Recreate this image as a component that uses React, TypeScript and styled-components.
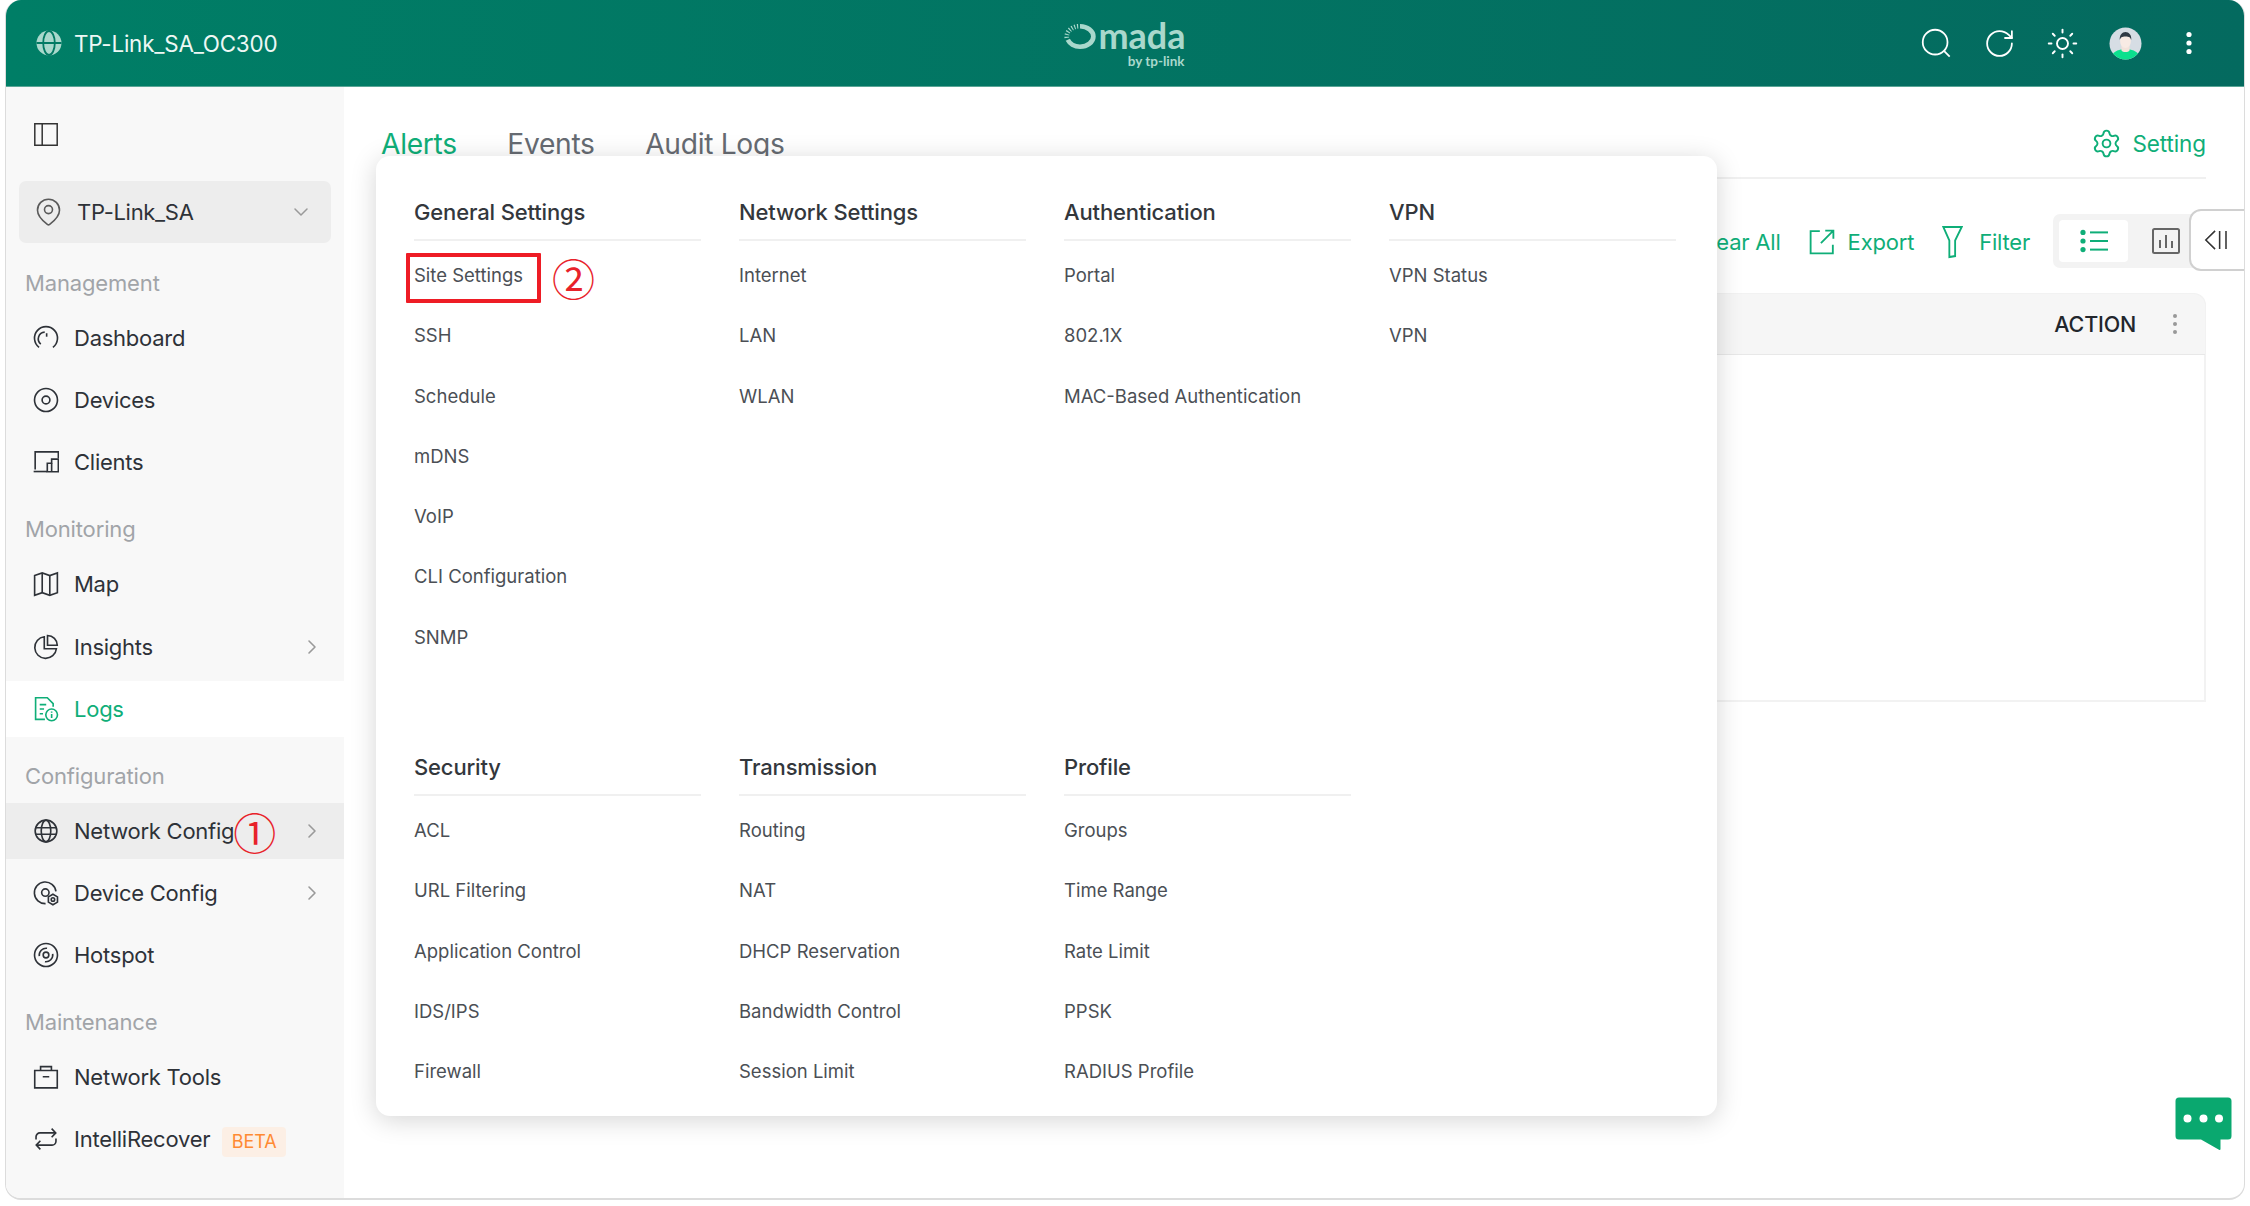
import React from "react";
import styled, { createGlobalStyle } from "styled-components";
import { Settings, Sun, RotateCw, ChevronRight, ChevronDown } from "lucide-react";

const Global = createGlobalStyle`
  html, body { margin: 0; padding: 0; background: #fff; }
  body { font-family: Inter, "Noto Sans", "Liberation Sans", sans-serif; }
  * { box-sizing: border-box; }
`;

const GREEN = "#0fae78";

const Page = styled.div`
  width: 2250px;
  height: 1206px;
  padding: 0 5px 6px;
`;
const Win = styled.div`
  position: relative;
  height: 1200px;
  border: solid #dcdcdc;
  border-width: 0 1px 2px 1px;
  border-radius: 16px;
  overflow: hidden;
  display: flex;
  flex-direction: column;
  background: #fff;
`;
const TopBar = styled.header`
  height: 87px;
  flex: none;
  margin: 0 -1px;
  background: linear-gradient(90deg, #007e66, #046a5f);
  border-bottom: 1px solid #5aa596;
  display: grid;
  grid-template-columns: 1fr auto 1fr;
  align-items: center;
`;
const Brand = styled.div`
  display: flex;
  align-items: center;
  gap: 12px;
  padding-left: 31px;
  color: #eef8f5;
  font-size: 22.4px;
  letter-spacing: -0.2px;
`;
const Logo = styled.div`
  display: flex;
  flex-direction: column;
  align-items: flex-end;
  color: #a9d8cc;
  margin-top: 2px;
`;
const LogoWord = styled.div`
  display: flex;
  align-items: flex-end;
  gap: 2px;
  font-size: 36px;
  font-weight: 700;
  line-height: 30px;
  font-family: Lato, Inter, sans-serif;
`;
const LogoSub = styled.div`
  font-size: 13.5px;
  line-height: 16px;
  margin-top: 3px;
  margin-right: 1px;
  font-family: Lato, Inter, sans-serif;
  font-weight: 700;
`;
const TopActions = styled.div`
  justify-self: end;
  display: flex;
  align-items: center;
  color: #fff;
  padding-right: 40px;
  gap: 30px;
`;
const TopIcon = styled.span`
  width: 33px;
  height: 33px;
  display: flex;
  align-items: center;
  justify-content: center;
`;
const Main = styled.div`
  flex: 1;
  display: flex;
  min-height: 0;
`;
const Sidebar = styled.aside`
  width: 338px;
  flex: none;
  background: #f8f8f8;
  padding-top: 35px;
`;
const ToggleRow = styled.div`
  height: 24px;
  padding-left: 28px;
  color: #333;
  display: flex;
  align-items: center;
`;
const SiteSelect = styled.div`
  margin: 35px 13px 0;
  height: 62px;
  background: #ededed;
  border-radius: 7px;
  display: flex;
  align-items: center;
  padding: 0 18px 0 17px;
  gap: 16px;
  font-size: 22px;
  color: #2e3238;
  letter-spacing: -0.3px;
`;
const GroupLabel = styled.div<{ $top: number }>`
  margin: ${(p) => p.$top}px 0 11px 19px;
  height: 32px;
  line-height: 32px;
  font-size: 22px;
  color: #a1a4a8;
  letter-spacing: -0.15px;
`;
const NavList = styled.nav`
  display: flex;
  flex-direction: column;
  gap: 6.2px;
`;
const NavItem = styled.div<{ $state?: "active" | "hover" }>`
  height: 56px;
  display: flex;
  align-items: center;
  padding: 0 20px 0 27px;
  gap: 15px;
  font-size: 22px;
  letter-spacing: -0.25px;
  color: ${(p) => (p.$state === "active" ? GREEN : "#2e3238")};
  background: ${(p) => (p.$state === "active" ? "#fff" : p.$state === "hover" ? "#ededed" : "transparent")};
`;
const NavIcon = styled.span`
  width: 26px;
  height: 26px;
  flex: none;
  display: flex;
  color: inherit;
`;
const Chevron = styled.span`
  margin-left: auto;
  display: flex;
  color: #9a9a9a;
`;
const Beta = styled.span`
  margin-left: -3px;
  margin-top: 5px;
  width: 64px;
  height: 30px;
  border-radius: 4px;
  background: #fcefe5;
  color: #ff8a33;
  font-size: 18px;
  display: flex;
  align-items: center;
  justify-content: center;
  letter-spacing: 0;
`;
const Mark = styled.span`
  font-family: "Noto Sans CJK SC", "DejaVu Sans", sans-serif;
  color: #e8222a;
  font-size: 43px;
  line-height: 43px;
  font-weight: 400;
`;
const NavMark = styled(Mark)`
  margin-left: -16px;
  margin-top: 2px;
`;
const Content = styled.section`
  flex: 1;
  padding: 0 38px 0 37px;
  min-width: 0;
`;
const Tabs = styled.div`
  height: 92px;
  padding-top: 23px;
  border-bottom: 2px solid #f0f0f0;
  display: flex;
  align-items: center;
  gap: 50.5px;
`;
const Tab = styled.span<{ $on?: boolean }>`
  font-size: 28.2px;
  letter-spacing: -0.3px;
  color: ${(p) => (p.$on ? GREEN : "#666b72")};
`;
const SettingLink = styled.span`
  margin-left: auto;
  display: flex;
  align-items: center;
  gap: 10px;
  font-size: 22.5px;
  letter-spacing: -0.1px;
  color: ${GREEN};
`;
const Toolbar = styled.div`
  margin-top: 35px;
  height: 54px;
  display: flex;
  justify-content: flex-end;
  align-items: center;
`;
const Action = styled.span<{ $gap: number; $after: number }>`
  display: flex;
  align-items: center;
  gap: ${(p) => p.$gap}px;
  margin-right: ${(p) => p.$after}px;
  margin-top: 2px;
  font-size: 22px;
  letter-spacing: -0.2px;
  color: ${GREEN};
`;
const ViewSwitch = styled.div`
  width: 153px;
  height: 54px;
  background: #f3f3f3;
  border-radius: 7px;
  padding: 6px;
  display: flex;
  gap: 3px;
`;
const ViewCell = styled.span<{ $on?: boolean }>`
  width: 69px;
  border-radius: 4px;
  background: ${(p) => (p.$on ? "#fff" : "transparent")};
  display: flex;
  align-items: center;
  justify-content: center;
`;
const Table = styled.div`
  margin-top: 25px;
  height: 409px;
  border: 2px solid #f2f2f2;
  border-radius: 12px 12px 0 0;
`;
const TableHead = styled.div`
  height: 61px;
  margin: -1px;
  background: #f6f6f6;
  border-bottom: 1px solid #e8e8e8;
  border-radius: 12px 12px 0 0;
  display: flex;
  justify-content: flex-end;
  align-items: center;
  gap: 35px;
  padding-right: 26px;
  font-size: 21.5px;
  font-weight: 500;
  letter-spacing: -0.2px;
  color: #22262c;
`;
const Collapse = styled.div`
  position: absolute;
  top: 209px;
  right: -2px;
  width: 57px;
  height: 62px;
  padding-right: 3px;
  background: #fff;
  border: 2px solid #d0d0d0;
  border-radius: 12px 0 0 12px;
  display: flex;
  align-items: center;
  justify-content: center;
`;
const Chat = styled.div`
  position: absolute;
  left: 2169px;
  top: 1097px;
  display: flex;
`;
const Menu = styled.div`
  position: absolute;
  left: 370px;
  top: 156px;
  width: 1341px;
  height: 960px;
  background: #fff;
  border-radius: 14px;
  box-shadow: 0 4px 26px rgba(0, 0, 0, 0.17);
  padding: 36px 0 0 38px;
  display: grid;
  grid-template-columns: repeat(4, 287px);
  grid-template-rows: 511px auto;
  column-gap: 38px;
  row-gap: 44px;
`;
const Col = styled.div<{ $first?: boolean }>`
  display: flex;
  flex-direction: column;
  ${(p) => (p.$first ? "grid-column: 1;" : "")}
`;
const ColHead = styled.div`
  height: 49px;
  line-height: 41px;
  border-bottom: 2px solid #f0f0f0;
  font-size: 22px;
  font-weight: 500;
  letter-spacing: -0.15px;
  color: #33373c;
  margin-bottom: 4px;
`;
const Row = styled.div`
  height: 60.27px;
  line-height: 60px;
  font-size: 18.5px;
  letter-spacing: 0;
  color: #4b4f55;
  white-space: nowrap;
`;
const RedBox = styled.div`
  position: absolute;
  left: 30px;
  top: 97px;
  width: 135px;
  height: 50px;
  border: 4px solid #ee1c25;
  border-radius: 1px;
`;
const RedMark = styled(Mark)`
  position: absolute;
  left: 176px;
  top: 100px;
`;

const Ic: React.FC<{ children: React.ReactNode; size?: number; sw?: number; color?: string }> = ({
  children,
  size = 26,
  sw = 1.5,
  color = "currentColor",
}) => (
  <svg width={size} height={size} viewBox="0 0 24 24" fill="none" stroke={color} strokeWidth={sw}>
    {children}
  </svg>
);

const icons: Record<string, React.ReactNode> = {
  dashboard: (
    <>
      <path d="M5.600 20.600A10.600 10.600 0 1 1 18.400 20.600" />
      <path d="M7.200 17.600A6.200 6.200 0 0 1 10.800 6.600" />
      <path d="M12.600 7.600v3.200" />
    </>
  ),
  devices: (
    <>
      <circle cx="12" cy="12" r="10.600" />
      <circle cx="12" cy="12" r="3.600" />
    </>
  ),
  clients: (
    <>
      <path d="M2 19V2.600h21.400v6" />
      <path d="M0.600 20.800H13" />
      <path d="M13.200 21v-7.800h4V9.400h6.200V21z" />
      <path d="M17.200 13.200V21" />
    </>
  ),
  map: (
    <>
      <path d="M1.500 4.200l7-2.400 7 2.400 7-2.400V20l-7 2.400-7-2.400-7 2.400z" />
      <path d="M8.500 2v18M15.500 4v18" />
    </>
  ),
  insights: (
    <>
      <path d="M10.400 2.600A10 10 0 1 0 21.600 13.600H10.400z" />
      <path d="M13.400 1.400A9 9 0 0 1 22.400 10.400H13.400z" />
    </>
  ),
  logs: (
    <>
      <path d="M11 21.600H2.400V1.600h10.800l5.400 5.400v3" />
      <path d="M6.200 8h6M6.200 12h4M6.200 16.400h3" />
      <circle cx="17.200" cy="17.400" r="5.400" />
      <path d="M17.200 16.600v3.600M17.200 14.400v1" />
    </>
  ),
  network: (
    <>
      <circle cx="12" cy="12" r="10" />
      <ellipse cx="12" cy="12" rx="4.400" ry="10" />
      <path d="M2 9h20M2 15h20" />
    </>
  ),
  deviceConfig: (
    <>
      <path d="M21.200 10.500A10 10 0 1 0 11.600 21.800" />
      <circle cx="11.400" cy="11.600" r="3.400" />
      <path d="M18.400 13.200l4.200 2.400v4.800l-4.200 2.400-4.200-2.400v-4.800z" />
      <circle cx="18.400" cy="18" r="1.600" />
    </>
  ),
  hotspot: (
    <>
      <circle cx="12" cy="12" r="10.600" />
      <circle cx="12" cy="12" r="2.600" />
      <path d="M5.800 13A6.400 6.400 0 0 1 13 5.800" />
      <path d="M18.200 11A6.400 6.400 0 0 1 11 18.200" />
    </>
  ),
  tools: (
    <>
      <path d="M1.600 6h20.800v16H1.600z" />
      <path d="M7 6V2.400h10V6" />
      <path d="M9 11.800h6" />
    </>
  ),
  recover: (
    <>
      <path d="M2.800 12.400V10a3.600 3.600 0 0 1 3.600-3.600H21" />
      <path d="M17.200 2.400L21 6.400l-3.800 4" />
      <path d="M21.200 11.600V14a3.600 3.600 0 0 1-3.600 3.600H3" />
      <path d="M6.800 21.600L3 17.600l3.800-4" />
    </>
  ),
};

type Item = { label: string; icon: string; state?: "active" | "hover"; chevron?: boolean; mark?: boolean; beta?: boolean };
const groups: { label: string; top: number; items: Item[] }[] = [
  {
    label: "Management",
    top: 24,
    items: [
      { label: "Dashboard", icon: "dashboard" },
      { label: "Devices", icon: "devices" },
      { label: "Clients", icon: "clients" },
    ],
  },
  {
    label: "Monitoring",
    top: 23,
    items: [
      { label: "Map", icon: "map" },
      { label: "Insights", icon: "insights", chevron: true },
      { label: "Logs", icon: "logs", state: "active" },
    ],
  },
  {
    label: "Configuration",
    top: 23,
    items: [
      { label: "Network Config", icon: "network", state: "hover", chevron: true, mark: true },
      { label: "Device Config", icon: "deviceConfig", chevron: true },
      { label: "Hotspot", icon: "hotspot" },
    ],
  },
  {
    label: "Maintenance",
    top: 23,
    items: [
      { label: "Network Tools", icon: "tools" },
      { label: "IntelliRecover", icon: "recover", beta: true },
    ],
  },
];

const menu: { head: string; rows: string[]; first?: boolean }[] = [
  { head: "General Settings", rows: ["Site Settings", "SSH", "Schedule", "mDNS", "VoIP", "CLI Configuration", "SNMP"] },
  { head: "Network Settings", rows: ["Internet", "LAN", "WLAN"] },
  { head: "Authentication", rows: ["Portal", "802.1X", "MAC-Based Authentication"] },
  { head: "VPN", rows: ["VPN Status", "VPN"] },
  { head: "Security", first: true, rows: ["ACL", "URL Filtering", "Application Control", "IDS/IPS", "Firewall"] },
  { head: "Transmission", rows: ["Routing", "NAT", "DHCP Reservation", "Bandwidth Control", "Session Limit"] },
  { head: "Profile", rows: ["Groups", "Time Range", "Rate Limit", "PPSK", "RADIUS Profile"] },
];

const Avatar = () => (
  <svg width="33" height="33" viewBox="0 0 33 33">
    <defs>
      <clipPath id="av">
        <circle cx="16.500" cy="16.500" r="16" />
      </clipPath>
    </defs>
    <g clipPath="url(#av)">
      <rect width="33" height="33" fill="#d6dde4" />
      <path d="M2 33c0-7 5-9.500 10-10.500h9c5 1 10 3.500 10 10.500z" fill="#0be08e" />
      <path d="M12.500 18h8v5.400c-1.400 2-6.600 2-8 0z" fill="#f3e3da" />
      <ellipse cx="16.500" cy="14" rx="5.400" ry="7" fill="#f8ebe4" />
      <path d="M10.800 13c-.6-5 2.400-8 5.700-8s6.400 3 5.700 8c-.6-2.600-2-3.600-5.700-3.600s-5 1-5.700 3.600z" fill="#2f3a44" />
    </g>
  </svg>
);

export default function App() {
  return (
    <>
      <Global />
      <Page>
        <Win>
          <TopBar>
            <Brand>
              <svg width="26" height="26" viewBox="0 0 26 26" fill="none">
                <circle cx="13" cy="13" r="12.500" fill="#a9d8cc" />
                <ellipse cx="13" cy="13" rx="5.800" ry="12" stroke="#027a64" strokeWidth="1.800" />
                <path d="M.5 13h25" stroke="#027a64" strokeWidth="1.800" />
              </svg>
              TP-Link_SA_OC300
            </Brand>
            <Logo>
              <LogoWord>
                <svg width="32" height="27" viewBox="0 0 34 27" fill="none">
                  <path d="M17 2.600C25 2.600 31.200 7.600 31.200 13.500S25 24.400 17 24.400C11 24.400 6 21 4 17" stroke="#a9d8cc" strokeWidth="5" />
                  <path d="M3 15C2 8 9 2.600 16 2.600" stroke="#a9d8cc" strokeWidth="5" strokeDasharray="1.200 1.800" />
                </svg>
                mada
              </LogoWord>
              <LogoSub>by tp-link</LogoSub>
            </Logo>
            <TopActions>
              <TopIcon>
                <Ic size={33} sw={1.3}>
                  <circle cx="11" cy="11" r="9" />
                  <path d="M17.600 17.600l4 4" />
                </Ic>
              </TopIcon>
              <TopIcon>
                <RotateCw size={33} strokeWidth={1.3} />
              </TopIcon>
              <TopIcon>
                <Sun size={33} strokeWidth={1.4} />
              </TopIcon>
              <TopIcon>
                <Avatar />
              </TopIcon>
              <TopIcon>
                <svg width="8" height="24" viewBox="0 0 8 24" fill="#fff">
                  <circle cx="4" cy="3.500" r="2.600" />
                  <circle cx="4" cy="12" r="2.600" />
                  <circle cx="4" cy="20.500" r="2.600" />
                </svg>
              </TopIcon>
            </TopActions>
          </TopBar>
          <Main>
            <Sidebar>
              <ToggleRow>
                <svg width="24" height="23" viewBox="0 0 24 23" fill="none" stroke="#333" strokeWidth="1.500">
                  <path d="M.8.8h22.400v21.400H.8zM8.200.8v21.400" />
                </svg>
              </ToggleRow>
              <SiteSelect>
                <svg width="25" height="28" viewBox="0 0 25 28" fill="none" stroke="#5a5a5a" strokeWidth="1.600">
                  <path d="M23.500 12.200c0 7-7.300 12.200-10.200 14.400a1.400 1.400 0 0 1-1.600 0C8.800 24.400 1.500 19.200 1.500 12.200a11 11 0 0 1 22 0z" />
                  <circle cx="12.500" cy="11.600" r="4" />
                </svg>
                TP-Link_SA
                <Chevron>
                  <ChevronDown size={24} strokeWidth={1.5} />
                </Chevron>
              </SiteSelect>
              {groups.map((g) => (
                <React.Fragment key={g.label}>
                  <GroupLabel $top={g.top}>{g.label}</GroupLabel>
                  <NavList>
                    {g.items.map((it) => (
                      <NavItem key={it.label} $state={it.state}>
                        <NavIcon>
                          <Ic>{icons[it.icon]}</Ic>
                        </NavIcon>
                        {it.label}
                        {it.mark && <NavMark>①</NavMark>}
                        {it.beta && <Beta>BETA</Beta>}
                        {it.chevron && (
                          <Chevron>
                            <ChevronRight size={24} strokeWidth={1.6} />
                          </Chevron>
                        )}
                      </NavItem>
                    ))}
                  </NavList>
                </React.Fragment>
              ))}
            </Sidebar>
            <Content>
              <Tabs>
                <Tab $on>Alerts</Tab>
                <Tab>Events</Tab>
                <Tab>Audit Logs</Tab>
                <SettingLink>
                  <Settings size={31} strokeWidth={1.5} />
                  Setting
                </SettingLink>
              </Tabs>
              <Toolbar>
                <Action $gap={0} $after={28}>
                  Clear All
                </Action>
                <Action $gap={13} $after={28}>
                  <Ic size={26} sw={1.7}>
                    <path d="M10 2H1.500v20.500H22v-8" />
                    <path d="M11 13L22 2M15 1.500h7.500V9" />
                  </Ic>
                  Export
                </Action>
                <Action $gap={16} $after={23}>
                  <svg width="21" height="34" viewBox="0 0 24 34" fill="none" stroke={GREEN} strokeWidth="2.100" preserveAspectRatio="none">
                    <path d="M1.500 2h21L15 15.500V31l-6.600 1V15.500z" />
                  </svg>
                  Filter
                </Action>
                <ViewSwitch>
                  <ViewCell $on>
                    <svg width="28" height="24" viewBox="0 0 28 24" fill={GREEN}>
                      <circle cx="3" cy="3.400" r="2.600" />
                      <circle cx="3" cy="12" r="2.600" />
                      <circle cx="3" cy="20.600" r="2.600" />
                      <rect x="10" y="2.400" width="18" height="2" />
                      <rect x="10" y="11" width="18" height="2" />
                      <rect x="10" y="19.600" width="18" height="2" />
                    </svg>
                  </ViewCell>
                  <ViewCell>
                    <svg width="28" height="26" viewBox="0 0 28 26" fill="none" stroke="#666" strokeWidth="2">
                      <rect x="1" y="1" width="26" height="24" rx="1.500" />
                      <path d="M8 12v8M14 7v13M20 13v7" />
                    </svg>
                  </ViewCell>
                </ViewSwitch>
              </Toolbar>
              <Table>
                <TableHead>
                  ACTION
                  <svg width="8" height="22" viewBox="0 0 8 22" fill="#999">
                    <circle cx="4" cy="3" r="2" />
                    <circle cx="4" cy="11" r="2" />
                    <circle cx="4" cy="19" r="2" />
                  </svg>
                </TableHead>
              </Table>
            </Content>
          </Main>
          <Collapse>
            <svg width="24" height="20" viewBox="0 0 26 22" fill="none" stroke="#333" strokeWidth="1.700">
              <path d="M12 1L1.800 11 12 21M17 1v20M24 1v20" />
            </svg>
          </Collapse>
          <Chat>
            <svg width="57" height="54" viewBox="0 0 57 54">
              <path
                d="M4 .5h49a3.500 3.500 0 0 1 3.500 3.500v35a3.500 3.500 0 0 1-3.500 3.500h-7.500v9.500a1 1 0 0 1-1.500.8l-18-10.300H4a3.500 3.500 0 0 1-3.500-3.500V4A3.500 3.500 0 0 1 4 .5z"
                fill="#0aa86f"
              />
              <circle cx="12.500" cy="21.500" r="4" fill="#fff" />
              <circle cx="28.500" cy="21.500" r="4" fill="#fff" />
              <circle cx="44" cy="21.500" r="4" fill="#fff" />
            </svg>
          </Chat>
          <Menu>
            {menu.map((c) => (
              <Col key={c.head} $first={c.first}>
                <ColHead>{c.head}</ColHead>
                {c.rows.map((r) => (
                  <Row key={r}>{r}</Row>
                ))}
              </Col>
            ))}
            <RedBox />
            <RedMark>②</RedMark>
          </Menu>
        </Win>
      </Page>
    </>
  );
}
